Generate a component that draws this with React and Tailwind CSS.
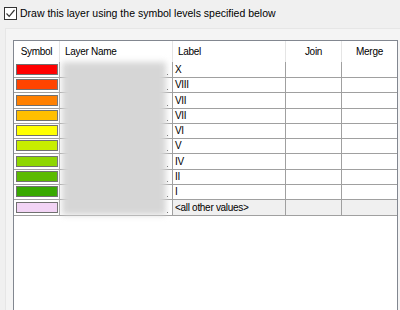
import React from 'react';

const rows = [
  { color: '#ff0000', label: 'X' },
  { color: '#ff4400', label: 'VIII' },
  { color: '#ff8000', label: 'VII' },
  { color: '#ffbf00', label: 'VII' },
  { color: '#ffff00', label: 'VI' },
  { color: '#c8ee00', label: 'V' },
  { color: '#8ed600', label: 'IV' },
  { color: '#5cbb00', label: 'II' },
  { color: '#38a800', label: 'I' },
  { color: '#f2d4f5', label: '<all other values>', other: true },
];

function Checkbox() {
  return (
    <div className="w-[13px] h-[13px] border border-[#333] bg-white flex items-center justify-center">
      <svg width="11" height="11" viewBox="0 0 11 11">
        <path d="M1.5 5.5 L4.2 8.3 L9.5 2" fill="none" stroke="#333" strokeWidth="1.2" />
      </svg>
    </div>
  );
}

export default function App() {
  return (
    <div
      className="w-[400px] h-[310px] bg-[#f0f0f0] overflow-hidden text-[10.5px] text-black"
      style={{ fontFamily: '"Liberation Sans", Arial, sans-serif' }}
    >
      {/* Symbol levels toggle */}
      <div className="flex items-center gap-[3px] pl-[4px] pt-[6px] h-[20px]">
        <Checkbox />
        <span className="leading-none">Draw this layer using the symbol levels specified below</span>
      </div>

      {/* Panel */}
      <div className="mt-[8px] ml-[5px] h-[282px] bg-[#f4f4f4] border-t border-l border-[#e6e6e6] pt-[11px] pl-[7px]">
        <div className="w-[385px] h-[271px] bg-white border border-[#828790] flex flex-col text-[10px] tracking-[-0.3px]">
          {/* Header */}
          <div className="grid grid-cols-[46px_113px_113px_56px_55px] h-[21px] shrink-0">
            <div className="border-r border-[#e5e5e5] flex items-center justify-center">Symbol</div>
            <div className="border-r border-[#e5e5e5] flex items-center pl-[5px]">Layer Name</div>
            <div className="border-r border-[#e5e5e5] flex items-center pl-[5px]">Label</div>
            <div className="border-r border-[#e5e5e5] flex items-center justify-center">Join</div>
            <div className="flex items-center justify-center">Merge</div>
          </div>

          {/* Rows */}
          <div className="relative">
            {rows.map((r, i) => (
              <div key={i} className="grid grid-cols-[46px_113px_113px_56px_55px] h-[15.3px]">
                <div className="border-r border-b border-[#a0a0a0] flex items-center pl-[2px]">
                  <div className="w-[42px] h-[11px] border border-[#707070]" style={{ background: r.color }} />
                </div>
                <div className="border-r border-b border-[#a0a0a0] flex items-end justify-end pr-[4px] pb-[2px]">
                  <span className="w-[1px] h-[1px] bg-[#555]" />
                </div>
                <div className={`border-r border-b border-[#a0a0a0] flex items-center pl-[2px] ${r.other ? 'bg-[#f0f0f0]' : ''}`}>
                  {r.label}
                </div>
                <div className={`border-r border-b border-[#a0a0a0] ${r.other ? 'bg-[#f0f0f0]' : ''}`} />
                <div className={`border-b border-[#a0a0a0] ${r.other ? 'bg-[#f0f0f0]' : ''}`} />
              </div>
            ))}
            {/* redacted layer names */}
            <div className="absolute left-[48px] top-0 w-[104px] h-[153px] bg-[#d6d6d6] blur-[3px]" />
          </div>
        </div>
      </div>
    </div>
  );
}
